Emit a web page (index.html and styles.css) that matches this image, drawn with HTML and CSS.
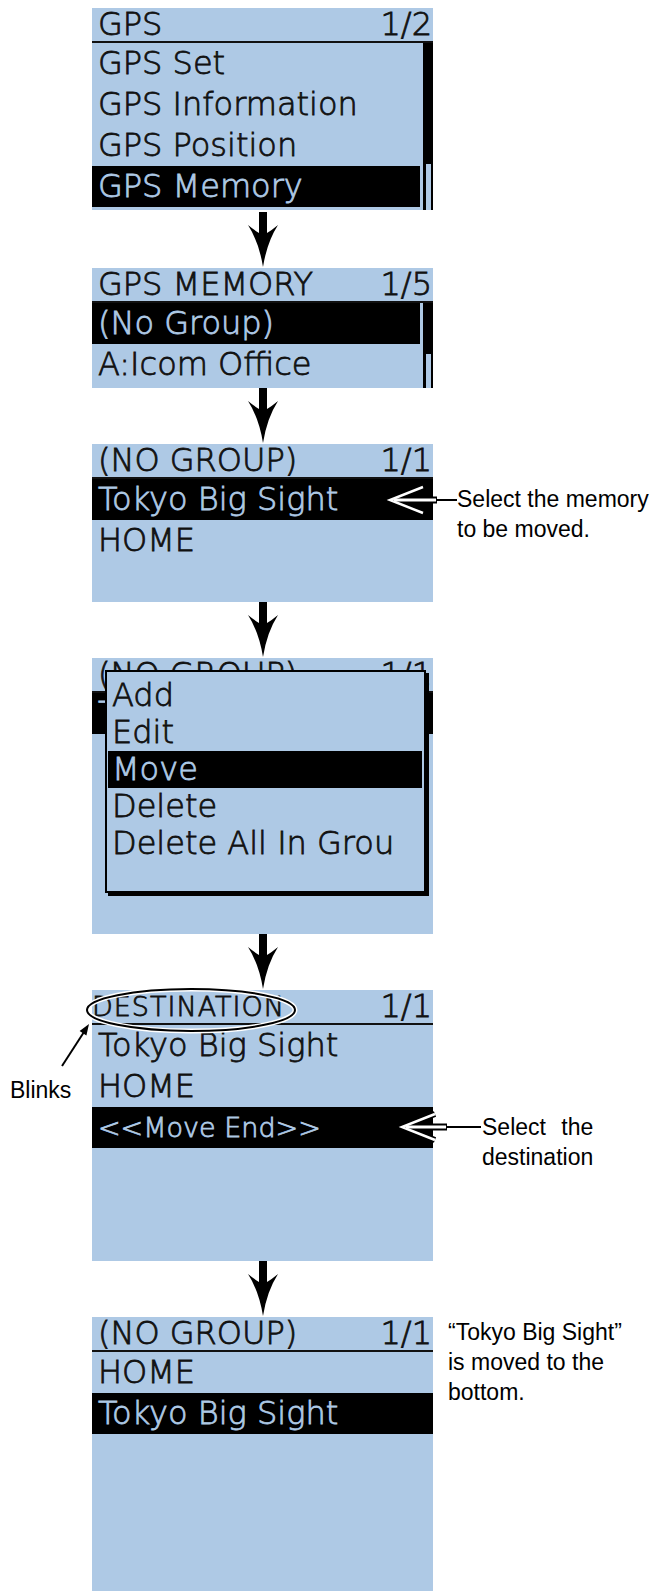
FILE: index.html
```html
<!DOCTYPE html>
<html lang="en">
<head>
    <meta charset="UTF-8">
    <title>GPS Memory - Move</title>
    <link rel="stylesheet" href="styles.css">
</head>
<body>
<div class="page">

    <!-- step 1: GPS menu -->
    <section class="step">
        <div class="lcd lcd-gps">
            <div class="lcd-head"><span>GPS</span><span>1/2</span></div>
            <div class="lcd-body">
                <ul class="lcd-list">
                    <li>GPS Set</li>
                    <li>GPS Information</li>
                    <li>GPS Position</li>
                    <li class="sel">GPS Memory</li>
                </ul>
                <div class="scrollbar"><div class="thumb" style="height: 46px"></div></div>
            </div>
        </div>
    </section>

    <div class="down down-tall"><svg viewBox="0 0 32 56" width="32" height="56"><path d="M12 0H20V21Q25 18 31 13Q20 30 16 55Q12 30 1 13Q7 18 12 21Z"/></svg></div>

    <!-- step 2: GPS memory groups -->
    <section class="step">
        <div class="lcd lcd-memory">
            <div class="lcd-head"><span>GPS MEMORY</span><span>1/5</span></div>
            <div class="lcd-body">
                <ul class="lcd-list">
                    <li class="sel">(No Group)</li>
                    <li>A:Icom Office</li>
                </ul>
                <div class="scrollbar"><div class="thumb" style="height: 34px"></div></div>
            </div>
        </div>
    </section>

    <div class="down"><svg viewBox="0 0 32 56" width="32" height="56"><path d="M12 0H20V21Q25 18 31 13Q20 30 16 55Q12 30 1 13Q7 18 12 21Z"/></svg></div>

    <!-- step 3: pick the memory -->
    <section class="step">
        <div class="lcd lcd-group">
            <div class="lcd-head"><span>(NO GROUP)</span><span>1/1</span></div>
            <ul class="lcd-list">
                <li class="sel">Tokyo Big Sight</li>
                <li>HOME</li>
            </ul>
        </div>
        <p class="note note-memory">Select the memory<br>to be moved.</p>
        <svg class="callout callout-memory" viewBox="0 0 72 40" width="72" height="40">
            <g fill="none" stroke="#000">
                <polyline points="38,7 5,20 38,33" stroke-width="6"/>
                <line x1="10" y1="20" x2="52" y2="20" stroke-width="7"/>
            </g>
            <g fill="none" stroke="#fff">
                <polyline points="38,7 5,20 38,33" stroke-width="2.5"/>
                <line x1="9" y1="20" x2="51" y2="20" stroke-width="3"/>
            </g>
            <line x1="52" y1="20" x2="72" y2="20" stroke="#000" stroke-width="2"/>
        </svg>
    </section>

    <div class="down"><svg viewBox="0 0 32 56" width="32" height="56"><path d="M12 0H20V21Q25 18 31 13Q20 30 16 55Q12 30 1 13Q7 18 12 21Z"/></svg></div>

    <!-- step 4: quick menu over the list -->
    <section class="step">
        <div class="lcd lcd-menu">
            <div class="lcd-head"><span>(NO GROUP)</span><span>1/1</span></div>
            <ul class="lcd-list">
                <li class="sel">Tokyo Big Sight</li>
                <li></li>
            </ul>
            <div class="popup">
                <ul class="popup-list">
                    <li>Add</li>
                    <li>Edit</li>
                    <li class="sel">Move</li>
                    <li>Delete</li>
                    <li>Delete All In Grou</li>
                </ul>
            </div>
        </div>
    </section>

    <div class="down"><svg viewBox="0 0 32 56" width="32" height="56"><path d="M12 0H20V21Q25 18 31 13Q20 30 16 55Q12 30 1 13Q7 18 12 21Z"/></svg></div>

    <!-- step 5: destination -->
    <section class="step">
        <p class="side-note">Blinks</p>
        <div class="lcd lcd-dest">
            <div class="lcd-head"><span class="narrow">DESTINATION</span><span>1/1</span></div>
            <ul class="lcd-list">
                <li>Tokyo Big Sight</li>
                <li>HOME</li>
                <li class="sel narrow-row">&lt;&lt;Move End&gt;&gt;</li>
            </ul>
        </div>
        <div class="note note-dest">
            <div class="spread">Select the</div>
            <div>destination</div>
        </div>
        <svg class="ring" viewBox="0 0 230 56" width="230" height="56">
            <ellipse cx="111" cy="28" rx="104" ry="21" fill="none" stroke="#fff" stroke-width="5"/>
            <ellipse cx="111" cy="28" rx="104" ry="21" fill="none" stroke="#000" stroke-width="2"/>
        </svg>
        <svg class="pointer" viewBox="0 0 45 60" width="45" height="60">
            <line x1="7" y1="50" x2="29" y2="16" stroke="#000" stroke-width="2"/>
            <polygon points="34,8 31.4,19.4 24.6,15"/>
        </svg>
        <svg class="callout callout-dest" viewBox="0 0 84 40" width="84" height="40">
            <g fill="none" stroke="#000">
                <polyline points="38,7 5,20 38,33" stroke-width="6"/>
                <line x1="10" y1="20" x2="50" y2="20" stroke-width="7"/>
            </g>
            <g fill="none" stroke="#fff">
                <polyline points="38,7 5,20 38,33" stroke-width="2.5"/>
                <line x1="9" y1="20" x2="49" y2="20" stroke-width="3"/>
            </g>
            <line x1="50" y1="20" x2="84" y2="20" stroke="#000" stroke-width="2"/>
        </svg>
    </section>

    <div class="down"><svg viewBox="0 0 32 56" width="32" height="56"><path d="M12 0H20V21Q25 18 31 13Q20 30 16 55Q12 30 1 13Q7 18 12 21Z"/></svg></div>

    <!-- step 6: result -->
    <section class="step">
        <div class="lcd lcd-result">
            <div class="lcd-head"><span>(NO GROUP)</span><span>1/1</span></div>
            <ul class="lcd-list">
                <li>HOME</li>
                <li class="sel">Tokyo Big Sight</li>
            </ul>
        </div>
        <p class="note note-result">“Tokyo Big Sight”<br>is moved to the<br>bottom.</p>
    </section>

</div>
</body>
</html>
```

FILE: styles.css
```css
body {
    margin: 0;
    background-color: #fff;
    color: #000;
    font-family: "Liberation Sans", Arial, sans-serif;
}
.page {
    padding-top: 8px;
}
.step {
    position: relative;
    display: grid;
    grid-template-columns: 92px 341px 1fr;
    align-items: start;
}

/* LCD screens */
.lcd {
    grid-column: 2;
    position: relative;
    display: flex;
    flex-direction: column;
    background-color: #aec9e5;
    color: #111;
    font-family: "DejaVu Sans", sans-serif;
    font-size: 32px;
    font-weight: 200;
    -webkit-text-stroke-width: 0.8px;
}
.lcd-gps { height: 202px; }
.lcd-memory { height: 120px; }
.lcd-group { height: 158px; }
.lcd-menu { height: 276px; }
.lcd-dest { height: 271px; }
.lcd-result { height: 274px; }

.lcd-head {
    display: flex;
    justify-content: space-between;
    align-items: center;
    height: 33px;
    line-height: 33px;
    padding: 0 1px 0 6px;
    border-bottom: 2px solid #111;
    white-space: nowrap;
}
.lcd-body {
    flex: 1;
    display: flex;
    gap: 3px;
}
.lcd-list, .popup-list {
    flex: 1;
    margin: 0;
    padding: 0;
    list-style: none;
}
.lcd-list li {
    height: 41px;
    line-height: 41px;
    padding-left: 6px;
    white-space: nowrap;
}
.lcd-list li.sel, .popup-list li.sel {
    background-color: #000;
    color: #aec9e5;
}
.narrow {
    margin-left: -6px;
    font-size: 27px;
    letter-spacing: 1px;
}
.narrow-row {
    font-size: 27px;
}
.scrollbar {
    width: 10px;
    display: flex;
    flex-direction: column;
    justify-content: flex-end;
    background-color: #000;
}
.thumb {
    margin: 0 2px 0 3px;
    background-color: #aec9e5;
}

/* quick menu */
.popup {
    position: absolute;
    left: 13px;
    top: 12px;
    width: 314px;
    height: 214px;
    padding: 5px 2px 0 1px;
    border: 2px solid #000;
    box-shadow: 3px 3px 0 #000;
    background-color: #aec9e5;
}
.popup-list li {
    height: 37px;
    line-height: 37px;
    padding-left: 4px;
    white-space: nowrap;
}

/* arrows between screens */
.down {
    display: flex;
    justify-content: center;
    align-items: flex-end;
    width: 341px;
    height: 56px;
    margin-left: 92px;
}
.down-tall {
    height: 58px;
}
.down svg {
    display: block;
}

/* notes */
.note {
    grid-column: 3;
    margin: 0;
    font-size: 23px;
    line-height: 30px;
}
.note-memory {
    padding: 40px 0 0 24px;
}
.note-dest {
    justify-self: start;
    display: inline-block;
    margin-left: 49px;
    padding-top: 122px;
}
.spread {
    text-align: justify;
    text-align-last: justify;
}
.note-result {
    padding-left: 15px;
}
.side-note {
    grid-column: 1;
    margin: 0;
    padding: 87px 0 0 10px;
    font-size: 23px;
    line-height: 26px;
}

/* overlays */
.callout, .ring, .pointer {
    position: absolute;
    overflow: visible;
}
.callout-memory {
    left: 385px;
    top: 36px;
}
.callout-dest {
    left: 397px;
    top: 117px;
}
.ring {
    left: 80px;
    top: -8px;
}
.pointer {
    left: 55px;
    top: 26px;
}
```
